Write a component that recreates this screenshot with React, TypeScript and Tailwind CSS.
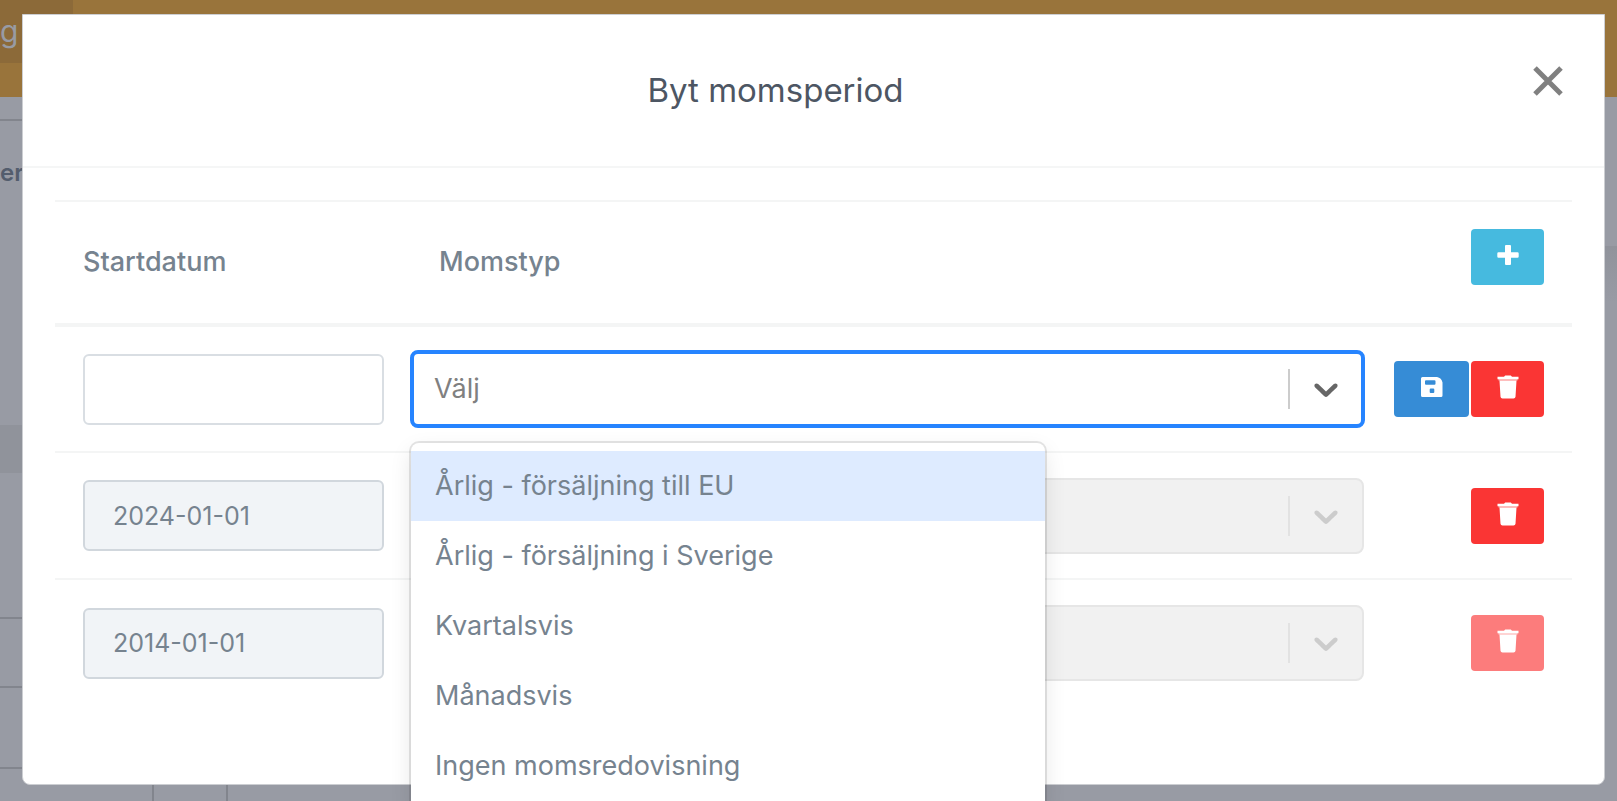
import React, {useState} from "react";

interface Period {
    id: number,
    startDate: string,
    isNew?: boolean,
    locked?: boolean,
}

const periods: Period[] = [
    {id: 1, startDate: '', isNew: true},
    {id: 2, startDate: '2024-01-01'},
    {id: 3, startDate: '2014-01-01', locked: true},
]

const vatTypes: string[] = [
    'Årlig - försäljning till EU',
    'Årlig - försäljning i Sverige',
    'Kvartalsvis',
    'Månadsvis',
    'Ingen momsredovisning',
]

const Chevron = () => (
    <svg viewBox="0 0 20 20" fill="currentColor" className="w-10 h-10">
        <path d="M4.516 7.548c0.436-0.446 1.043-0.481 1.576 0l3.908 3.747 3.908-3.747c0.533-0.481 1.141-0.446 1.574 0 0.436 0.445 0.408 1.197 0 1.615-0.406 0.418-4.695 4.502-4.695 4.502-0.217 0.223-0.502 0.335-0.787 0.335s-0.57-0.112-0.789-0.335c0 0-4.287-4.084-4.695-4.502s-0.436-1.17 0-1.615z"/>
    </svg>
)

const PlusIcon = () => (
    <svg viewBox="0 0 24 24" fill="currentColor" className="w-6 h-6">
        <path d="M10 2h4a1 1 0 0 1 1 1v6.2h6.5a1.2 1.2 0 0 1 1.2 1.2v3.1a1.2 1.2 0 0 1-1.2 1.2H15V21a1 1 0 0 1-1 1h-4a1 1 0 0 1-1-1v-6.3H2.5a1.2 1.2 0 0 1-1.2-1.2v-3.1a1.2 1.2 0 0 1 1.2-1.2H9V3a1 1 0 0 1 1-1z"/>
    </svg>
)

const SaveIcon = () => (
    <svg viewBox="0 0 24 24" fill="currentColor" fillRule="evenodd" className="w-6 h-6">
        <path d="M2.5 2H17c3 .5 5 2.5 5.500 5.500V20.500a1.500 1.500 0 0 1-1.500 1.500H2.500A1.500 1.500 0 0 1 1 20.500v-17A1.500 1.500 0 0 1 2.500 2zM6 5.200a1 1 0 0 0-1 1v2.600a1 1 0 0 0 1 1h8.500a1 1 0 0 0 1-1V6.200a1 1 0 0 0-1-1zM10.700 13.500a1 1 0 0 0-1 1v2.600a1 1 0 0 0 1 1h2.600a1 1 0 0 0 1-1v-2.600a1 1 0 0 0-1-1z"/>
    </svg>
)

const TrashIcon = () => (
    <svg viewBox="0 0 24 24" fill="currentColor" className="w-6 h-6">
        <path d="M8 1.8L9.2.5h5.600L16 1.800h6.500v2.400h-21V1.800z"/>
        <path d="M2.5 4.2h19V5.500h-19z" opacity="0.7"/>
        <path d="M3.500 5.500h17l-1 16.200a2 2 0 0 1-2 1.800H6.500a2 2 0 0 1-2-1.800z"/>
    </svg>
)

const Backdrop = () => (
    <div className="absolute inset-0 flex flex-col overflow-hidden bg-[#989ba4]" aria-hidden="true">
        <div className="h-[97px] shrink-0 bg-[#99743b]">
            <div className="flex h-[63px] w-[73px] items-center bg-[#8c6a39] text-[30px] text-[#989ba4]">g</div>
        </div>
        <div className="flex grow">
            <div className="flex w-1/2 flex-col">
                <div className="h-6 shrink-0 border-b-2 border-[#82858d]"/>
                <div className="h-[304px] shrink-0 pt-8 text-[24px] font-semibold leading-10 text-[#535d6d]">er</div>
                <div className="h-12 shrink-0 bg-[#90939b]"/>
                <div className="h-[146px] shrink-0 border-b-2 border-[#82858d]"/>
                <div className="h-[69px] shrink-0 border-b-2 border-[#82858d]"/>
                <div className="h-[81px] shrink-0 border-b-2 border-[#82858d]"/>
                <div className="ml-[152px] w-[76px] grow border-x-2 border-[#82858d]"/>
            </div>
            <div className="w-1/2 pt-[149px]">
                <div className="h-14 bg-linear-to-b from-[#90939b] to-[#989ba4]"/>
            </div>
        </div>
    </div>
)

const VatSelect = ({period}: { period: Period }) => {
    const [value, setValue] = useState<string>('')

    if (!period.isNew) {
        return (
            <div className="px-px">
                <button type="button" disabled aria-label="Momstyp"
                        className="flex h-[76px] w-full items-center justify-end rounded-lg border-2 border-[#e6e6e6] bg-[#f1f1f1] text-[#cccccc]"
                >
                    <span className="h-10 w-0.5 bg-[#e2e2e2]"/>
                    <span className="px-4"><Chevron/></span>
                </button>
            </div>
        )
    }

    return (
        <div className="relative">
            <button type="button" aria-label="Momstyp" aria-expanded="true"
                    className="flex h-[78px] w-full items-center rounded-lg border-4 border-[#2684ff] bg-white text-[#666666]"
            >
                <span className="grow pl-5 text-left text-[27px] text-[#808080]">{value || 'Välj'}</span>
                <span className="h-10 w-0.5 bg-[#cccccc]"/>
                <span className="pl-4 pr-[15px]"><Chevron/></span>
            </button>
            <ul role="listbox"
                className="absolute left-px top-[93px] z-10 w-[calc(66%+4px)] rounded-lg bg-white py-2 shadow-[0_0_0_2px_rgba(0,0,0,0.1),0_8px_22px_rgba(0,0,0,0.1)]"
            >
                {vatTypes.map((type, index) => (
                    <li key={type} role="option" aria-selected={index === 0}
                        onClick={() => setValue(type)}
                        className={index === 0
                            ? "flex h-[70px] items-center bg-[#deebff] px-6 text-[27px] text-[#76838f]"
                            : "flex h-[70px] items-center px-6 text-[27px] text-[#76838f]"}
                    >
                        {type}
                    </li>
                ))}
            </ul>
        </div>
    )
}

const App = () => {
    return (
        <div className="relative h-screen overflow-hidden font-['Inter',sans-serif]">
            <Backdrop/>

            <div role="dialog" aria-labelledby="title"
                 className="relative mx-3 mt-3.5 rounded-b-lg border border-[#ccced2] bg-white sm:ml-[22px]"
            >
                <div className="flex h-[153px] items-center border-b-2 border-[#f5f6f6] pr-9">
                    <h4 id="title" className="grow text-center text-[33px] text-[#4d5663]">Byt momsperiod</h4>
                    <button type="button" aria-label="Stäng" className="mb-5 p-1 text-[#808080]">
                        <svg viewBox="0 0 32 32" className="h-8 w-8" stroke="currentColor" strokeWidth="5">
                            <path d="M3 3L29 29M29 3L3 29"/>
                        </svg>
                    </button>
                </div>

                <div className="px-8 pb-[78px] pt-8">
                    <table className="w-full table-fixed border-collapse">
                        <thead>
                        <tr className="h-[124px] border-b-4 border-t-2 border-[#f4f5f5] text-left text-[27px] text-[#76838f]">
                            <th className="w-[355px] pl-7 font-medium">Startdatum</th>
                            <th className="pl-[29px] font-medium">Momstyp</th>
                            <th className="w-[207px] pb-3 pr-7 text-right">
                                <button type="button" aria-label="Lägg till"
                                        className="inline-flex h-14 w-[73px] items-center justify-center rounded bg-[#46badf] pb-1 align-middle text-white"
                                >
                                    <PlusIcon/>
                                </button>
                            </th>
                        </tr>
                        </thead>
                        <tbody>
                        {periods.map(period => (
                            <tr key={period.id} className="h-[127px] border-b-2 border-[#f4f5f5] last:border-b-0">
                                <td className="pl-7 pr-[26px]">
                                    <input type="text" aria-label="Startdatum"
                                           defaultValue={period.startDate}
                                           disabled={!period.isNew}
                                           className="block h-[71px] w-full rounded-md border-2 border-[#d9dee3] px-7 text-[25px] text-[#76838f] disabled:border-[#d1d7dd] disabled:bg-[#f1f4f7]"
                                    />
                                </td>
                                <td><VatSelect period={period}/></td>
                                <td className="pr-7">
                                    <div className="flex justify-end gap-0.5">
                                        {period.isNew && (
                                            <button type="button" aria-label="Spara"
                                                    className="flex h-14 w-[75px] items-center justify-center rounded bg-[#368cd6] pb-1 text-white"
                                            >
                                                <SaveIcon/>
                                            </button>
                                        )}
                                        <button type="button" aria-label="Ta bort" disabled={period.locked}
                                                className="flex h-14 w-[73px] items-center justify-center rounded bg-[#fa3534] pb-1 text-white disabled:bg-[#fc7c7c]"
                                        >
                                            <TrashIcon/>
                                        </button>
                                    </div>
                                </td>
                            </tr>
                        ))}
                        </tbody>
                    </table>
                </div>
            </div>
        </div>
    );
};
export default App
